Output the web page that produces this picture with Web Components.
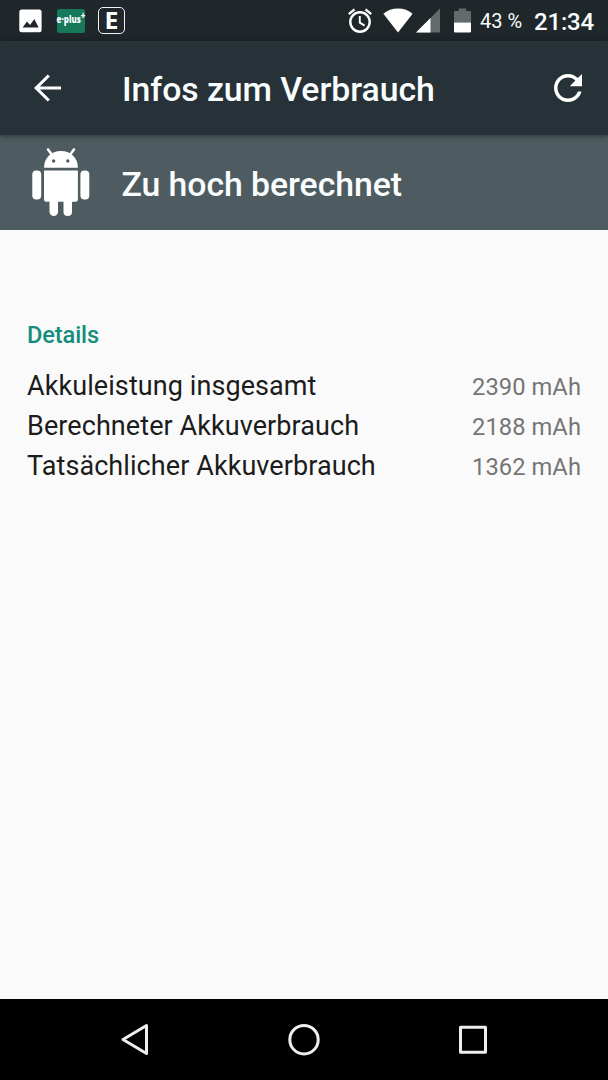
<!DOCTYPE html>
<html lang="de">
<head>
<meta charset="utf-8">
<title>Infos zum Verbrauch</title>
<style>
html,body{margin:0;height:100%;background:#fafafa;overflow:hidden}
body{font-family:Roboto,sans-serif}
</style>
</head>
<body>
<battery-screen>
  <status-bar slot="status" time="21:34" level="43 %"></status-bar>
  <app-toolbar slot="toolbar">Infos zum Verbrauch</app-toolbar>
  <entry-header slot="header">Zu hoch berechnet</entry-header>
  <detail-section>
    <span slot="title">Details</span>
    <detail-row value="2390 mAh">Akkuleistung insgesamt</detail-row>
    <detail-row value="2188 mAh">Berechneter Akkuverbrauch</detail-row>
    <detail-row value="1362 mAh">Tatsächlicher Akkuverbrauch</detail-row>
  </detail-section>
  <nav-bar slot="nav"></nav-bar>
</battery-screen>
<script>
function define(name, html) {
  customElements.define(name, class extends HTMLElement {
    constructor() {
      super();
      const root = this.attachShadow({mode: 'open'});
      const t = document.createElement('template');
      t.innerHTML = html;
      root.append(t.content.cloneNode(true));
    }
    connectedCallback() {
      this.shadowRoot.querySelectorAll('[data-attr]').forEach(n => {
        n.textContent = this.getAttribute(n.dataset.attr);
      });
    }
  });
}
define('battery-screen', `
<style>
:host{display:flex;flex-direction:column;width:608px;height:1080px;background:#fafafa}
main{flex:1;min-height:0}
</style>
<slot name="status"></slot><slot name="toolbar"></slot><slot name="header"></slot>
<main><slot></slot></main><slot name="nav"></slot>`);

define('status-bar', `
<style>
:host{display:flex;align-items:center;height:41px;box-sizing:border-box;background:#1f272a;color:#fafdfd;padding:0 14px 0 19px;flex:none}
svg{display:block;flex:none}
.chip{box-sizing:border-box;display:flex;align-items:center;justify-content:center}
.eplus{width:28px;height:24px;margin-left:15px;background:#16795a;border-radius:2.5px;font:700 11px/20px "Open Sans",sans-serif;padding-bottom:3px;white-space:nowrap}
.eplus sup{font-size:11px;line-height:0;vertical-align:4px}
.eplus b{display:block;transform:scaleX(.72)}
.e{width:27px;height:27px;margin-left:13px;border:1.5px solid #eef2f2;border-radius:5px;font:700 23px/24px "Open Sans",sans-serif}
.e span{display:block;margin-top:-2px;transform:scaleX(1.08)}
.space{flex:1}
.level{font-size:20px;margin:1px 0 0 9px;white-space:nowrap}
.time{font-size:24px;font-weight:500;letter-spacing:-.2px;margin:2px 0 0 12px}
</style>
<svg width="23" height="24" viewBox="0 0 23 24"><rect x=".3" y=".6" width="22.3" height="22.6" rx="2.5" fill="#fff"/><path d="M3.6 18.5L8 12.4l3 3.6 4.3-6 4.4 8.5z" fill="#1f272a"/></svg>
<div class="chip eplus"><b>e·plus<sup>+</sup></b></div>
<div class="chip e"><span>E</span></div>
<div class="space"></div>
<svg width="26" height="26" viewBox="0 0 26 26" fill="none" stroke="#fff" stroke-width="2.4"><circle cx="13" cy="14" r="9.700"/><path d="M1.8 6.2L7.5 1.4M24.2 6.2L18.5 1.4"/><path d="M12.8 8v6.600l4.800 3" stroke-width="1.900"/></svg>
<svg style="margin-left:10px" width="30" height="25" viewBox="0 0 30 25"><path d="M15 24.5L.4 5.8C4.5 2.4 9.4.6 15 .6s10.500 1.800 14.600 5.200z" fill="#fff"/></svg>
<svg style="margin-left:3.500px" width="24" height="25" viewBox="0 0 24 25"><path d="M0 24.500L24 .5v24z" fill="#656b6d"/><path d="M0 24.500L14.500 10v14.500z" fill="#fff"/></svg>
<svg style="margin-left:14px" width="17" height="25" viewBox="0 0 17 25"><path d="M0 4.200q0-1.200 1.200-1.200H4.800V.5h7.400V3h3.600q1.200 0 1.200 1.200V14.500H0z" fill="#656b6d"/><path d="M0 14.400h17v8.900q0 1.200-1.200 1.200H1.200Q0 24.500 0 23.300z" fill="#fff"/></svg>
<span class="level" data-attr="level"></span><span class="time" data-attr="time"></span>`);

define('app-toolbar', `
<style>
:host{display:flex;align-items:center;height:94px;flex:none;box-sizing:border-box;padding:0 26.500px 0 33px;background:#263238;color:#fafdfd;position:relative;z-index:1;box-shadow:0 1px 6px rgba(0,0,0,.45)}
h1{flex:1;margin:4px 0 0 60px;font-size:33.800px;font-weight:500;line-height:40px;letter-spacing:-.06px;white-space:nowrap}
svg{display:block;flex:none}
</style>
<svg width="29" height="28" viewBox="0 0 29 28" fill="none" stroke="#fff" stroke-width="3.100"><path d="M28 14H3.500M15.800 1.500L3.200 14l12.600 12.500"/></svg>
<h1><slot></slot></h1>
<svg width="28" height="28" viewBox="4 4 16 16" fill="#fff"><path d="M17.650 6.350C16.200 4.900 14.210 4 12 4c-4.420 0-7.990 3.580-7.990 8s3.570 8 7.990 8c3.730 0 6.840-2.550 7.730-6h-2.080c-.82 2.330-3.040 4-5.650 4-3.310 0-6-2.690-6-6s2.690-6 6-6c1.660 0 3.140.69 4.220 1.780L13 11h7V4l-2.350 2.350z"/></svg>`);

define('entry-header', `
<style>
:host{display:flex;align-items:center;height:94.500px;flex:none;box-sizing:border-box;padding-left:31px;background:#4e5c61;color:#fafdfd}
h2{margin:5.500px 0 0 30.500px;font-size:33.800px;font-weight:500;line-height:40px;letter-spacing:-.06px;white-space:nowrap}
svg{display:block;flex:none}
</style>
<svg width="60" height="70" viewBox="0 0 60 70" fill="#fff"><path d="M13 20.800C13 11 20 4 30 4S46.900 11 46.900 20.800z"/><path d="M17 2.400l4.200 5.600M43 2.400l-4.200 5.600" stroke="#fff" stroke-width="2.500" stroke-linecap="round"/><circle cx="22.600" cy="14" r="1.700" fill="#4e5c61"/><circle cx="36.800" cy="14" r="1.700" fill="#4e5c61"/><path d="M13 23.500h33.900v28.700q0 2.500-2.500 2.500H41V65a4.250 4 0 0 1-8.500 0V54.700H27V65a4.250 4 0 0 1-8.500 0V54.700H15.500q-2.500 0-2.500-2.500z"/><rect x="1.300" y="23.500" width="8.900" height="29" rx="4"/><rect x="49.400" y="23.500" width="8.900" height="29" rx="4"/></svg>
<h2><slot></slot></h2>`);

define('detail-section', `
<style>
:host{display:block;padding:89.500px 27px 0}
h3{margin:0 0 15.300px;font-size:23.600px;line-height:32px;font-weight:500;letter-spacing:-.12px;color:#148e7c}
</style>
<h3><slot name="title"></slot></h3><slot></slot>`);

define('detail-row', `
<style>
:host{display:flex;justify-content:space-between;align-items:baseline;height:39.700px;line-height:40px;white-space:nowrap;font-size:27px;letter-spacing:.08px;color:#1c1c1c}
.value{font-size:23.700px;letter-spacing:.06px;color:#757575}
</style>
<span><slot></slot></span><span class="value" data-attr="value"></span>`);

define('nav-bar', `
<style>
:host{display:flex;justify-content:center;gap:137px;align-items:center;height:81px;flex:none;background:#000}
svg{display:block}
</style>
<svg width="32" height="34" viewBox="0 0 32 34" fill="none" stroke="#eee" stroke-width="3" stroke-linejoin="round"><path d="M4 16.500L27.500 2.500v28z"/></svg>
<svg width="32" height="34" viewBox="0 0 32 34" fill="none" stroke="#eee" stroke-width="3"><circle cx="16" cy="16.700" r="14.200"/></svg>
<svg width="32" height="34" viewBox="0 0 32 34" fill="none" stroke="#eee" stroke-width="3" stroke-linejoin="round"><rect x="3.500" y="4.200" width="25" height="25"/></svg>`);
</script>
</body>
</html>
